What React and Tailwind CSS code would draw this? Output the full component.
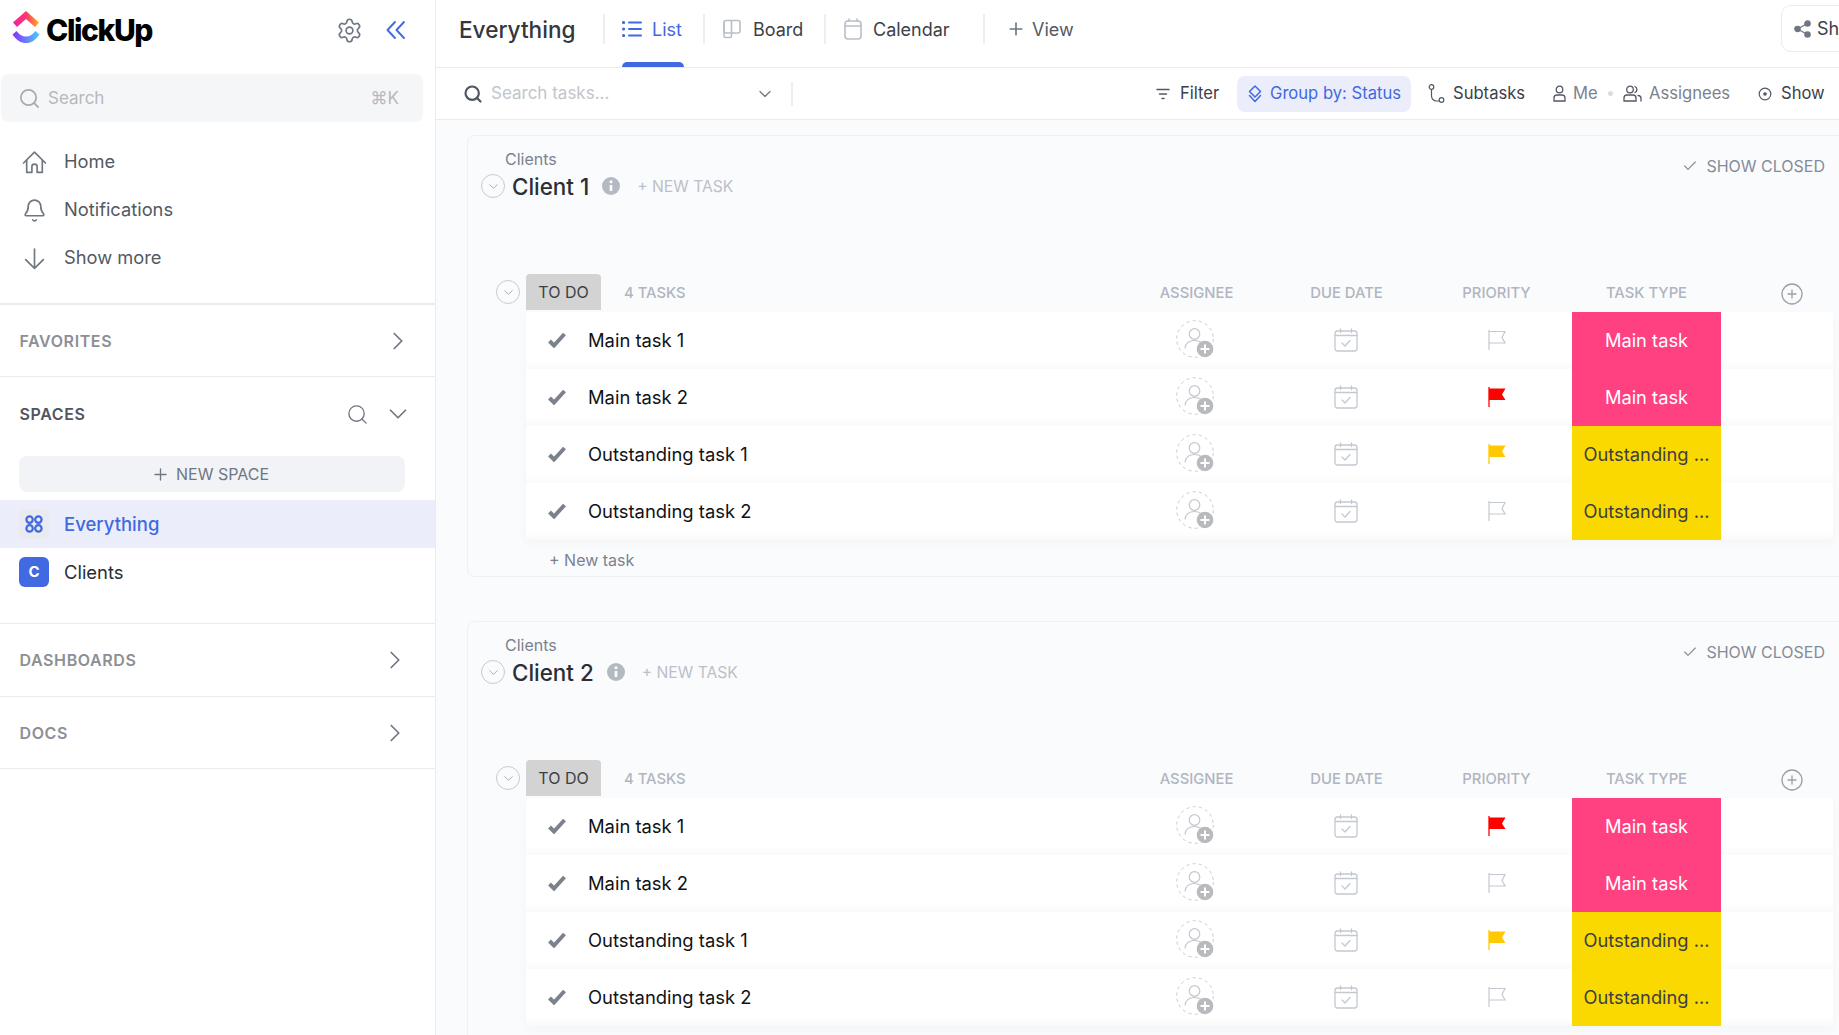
import React from "react";
import { Bell, Settings, Search, ChevronRight, ChevronDown, Plus, Check, CirclePlus } from "lucide-react";

const Logo = () => (
  <svg width="28" height="35" viewBox="0 0 28 35" className="-mt-[6px] shrink-0">
    <defs>
      <linearGradient id="lgTop" x1="0" y1="0" x2="1" y2="0">
        <stop offset="0" stopColor="#f81ba4" />
        <stop offset="0.55" stopColor="#fb3e6a" />
        <stop offset="1" stopColor="#ffb01f" />
      </linearGradient>
      <linearGradient id="lgBot" x1="0" y1="0" x2="1" y2="0">
        <stop offset="0" stopColor="#8930fd" />
        <stop offset="1" stopColor="#49ccf9" />
      </linearGradient>
    </defs>
    <path d="M1 12.5 L14 1 L27 12.5 L23 17 L14 9 L5 17 Z" fill="url(#lgTop)" />
    <path d="M0.5 24.5 L4.5 21 C7.5 25 10.5 26.5 14 26.5 C17.5 26.5 20.5 25 23.5 21 L27.5 24.5 C23.5 30.5 19 33 14 33 C9 33 4.5 30.5 0.5 24.5 Z" fill="url(#lgBot)" />
  </svg>
);

const HomeIcon = () => (
  <svg width="25" height="25" viewBox="0 0 24 24" fill="none" stroke="#6f7782" strokeWidth="1.6" strokeLinecap="round" strokeLinejoin="round">
    <path d="M1.5 12.5L12 2L22.5 12.5" />
    <path d="M4.5 10V21.5H9.5V16a2.5 2.5 0 0 1 5 0V21.5H19.5V10" />
  </svg>
);
const BellIcon = () => <Bell size={25} strokeWidth={1.6} className="text-[#6f7782]" />;
const ArrowIcon = () => (
  <svg width="25" height="25" viewBox="0 0 24 24" fill="none" stroke="#6f7782" strokeWidth="1.6" strokeLinecap="round" strokeLinejoin="round">
    <path d="M12 3V21.5M3.5 13L12 21.5L20.5 13" />
  </svg>
);

const SideRow = ({ icon: I, label }) => (
  <div className="flex h-12 items-center pl-[22px] text-[18.3px] text-[#535963]">
    <div className="w-[25px]"><I /></div>
    <span className="ml-[17px]">{label}</span>
  </div>
);

const SideSection = ({ label, height, pad }) => (
  <div className={"flex items-center justify-between border-b border-[#e9ebf0] pl-[19.5px] " + height + " " + pad}>
    <span className="text-[16px] font-semibold tracking-[0.6px] text-[#8c8f94]">{label}</span>
    <ChevronRight size={30} strokeWidth={1.4} className="text-[#6f7782]" />
  </div>
);

const Sidebar = () => (
  <div className="flex h-full w-[436px] shrink-0 flex-col border-r border-[#e9ebf0] bg-white">
    <div className="mb-[14px] flex h-[60px] items-center pl-[12px]">
      <Logo />
      <span className="ml-[6px] text-[30px] font-extrabold leading-none tracking-[-1.4px] text-black">ClickUp</span>
      <Settings size={27} strokeWidth={1.5} className="ml-auto text-[#6f7782]" />
      <svg width="20" height="20" viewBox="0 0 20 20" fill="none" stroke="#4169e1" strokeWidth="1.9" strokeLinecap="round" strokeLinejoin="round" className="ml-[23px] mr-[29px]">
        <path d="M9 2L1.5 10L9 18M18 2L10.5 10L18 18" />
      </svg>
    </div>
    <div className="ml-px flex h-12 w-[422px] items-center rounded-lg bg-[#f5f6f8] pl-[17px] pr-[24px] text-[17px] text-[#b5b9c0]">
      <Search size={23} strokeWidth={1.8} className="text-[#a6aab1]" />
      <span className="ml-[7px] pt-px">Search</span>
      <span className="ml-auto pt-px text-[17px]">⌘K</span>
    </div>
    <div className="mt-[16px] mb-[21px]">
      <SideRow icon={HomeIcon} label="Home" />
      <SideRow icon={BellIcon} label="Notifications" />
      <SideRow icon={ArrowIcon} label="Show more" />
    </div>
    <div className="border-t-2 border-[#e9ebf0]">
      <SideSection label="FAVORITES" height="h-[72px]" pad="pr-[22px]" />
    </div>
    <div className="border-b border-[#e9ebf0] pb-[27px]">
      <div className="flex h-[74px] items-center pl-[19.5px] pr-[22px]">
        <span className="text-[16px] font-semibold tracking-[0.6px] text-[#50565f]">SPACES</span>
        <Search size={23} strokeWidth={1.4} className="ml-auto text-[#6f7782]" />
        <ChevronDown size={30} strokeWidth={1.4} className="ml-[14px] text-[#6f7782]" />
      </div>
      <div className="mx-[19px] mt-[5px] flex h-[36px] w-[386px] items-center justify-center rounded-lg bg-[#f2f3f7] pr-[4px] text-[16px] text-[#6f7782]">
        <Plus size={19} strokeWidth={1.7} className="mr-[6px]" />
        NEW SPACE
      </div>
      <div className="mt-[8px] flex h-12 items-center bg-[#ebeefa] pl-[19px]">
        <div className="flex h-[30px] w-[30px] items-center justify-center rounded-md bg-[#e9ebf0]">
          <svg width="18" height="18" viewBox="0 0 18 18" fill="none" stroke="#4169e1" strokeWidth="2.2">
            <circle cx="4.6" cy="4.6" r="3.2" />
            <circle cx="13.4" cy="4.6" r="3.2" />
            <circle cx="4.6" cy="13.4" r="3.2" />
            <circle cx="13.4" cy="13.4" r="3.2" />
          </svg>
        </div>
        <span className="ml-[15px] pt-px text-[18.5px] font-medium text-[#4169e1]">Everything</span>
      </div>
      <div className="flex h-12 items-center pl-[19px]">
        <div className="flex h-[30px] w-[30px] items-center justify-center rounded-md bg-[#4169e1] text-[15px] font-bold text-white">C</div>
        <span className="ml-[15px] pt-px text-[18.4px] text-[#292d34]">Clients</span>
      </div>
    </div>
    <SideSection label="DASHBOARDS" height="h-[73px]" pad="pr-[25px]" />
    <SideSection label="DOCS" height="h-[72px]" pad="pr-[25px]" />
  </div>
);

const ListIcon = () => (
  <svg width="20" height="18" viewBox="0 0 20 18" stroke="#4169e1" strokeWidth="2" fill="none" strokeLinecap="round">
    <path d="M7 2.5H19M7 9H19M7 15.5H19" />
    <circle cx="1.6" cy="2.5" r="1" fill="#4169e1" strokeWidth="1.2" />
    <circle cx="1.6" cy="9" r="1" fill="#4169e1" strokeWidth="1.2" />
    <circle cx="1.6" cy="15.5" r="1" fill="#4169e1" strokeWidth="1.2" />
  </svg>
);
const BoardIcon = () => (
  <svg width="18" height="20" viewBox="0 0 18 20" fill="none" stroke="#b9bec7" strokeWidth="1.6" strokeLinejoin="round">
    <rect x="1" y="1.5" width="16" height="12.5" rx="2" />
    <path d="M8.5 1.5V17a1.5 1.5 0 0 1-1.5 1.5H2.5A1.5 1.5 0 0 1 1 17V3" />
  </svg>
);
const CalIcon = () => (
  <svg width="18" height="22" viewBox="0 0 18 22" fill="none" stroke="#b9bec7" strokeWidth="1.6" strokeLinecap="round">
    <rect x="1" y="3" width="16" height="18" rx="3" />
    <path d="M1 8H17M5 1V3M13 1V3" />
  </svg>
);

const Divider = ({ cls }) => <div className={"h-[30px] w-[2px] bg-[#eceef2] " + cls} />;

const TopBar = () => (
  <div className="flex h-[68px] shrink-0 items-start border-b border-[#e9ebf0] pl-[23px] pt-[14px] text-[18px] leading-[30px] text-[#3c4149]">
    <span className="w-[144px] pt-px text-[22.6px] font-medium leading-[30px] text-[#33373e]">Everything</span>
    <Divider cls="" />
    <div className="relative ml-[17px] flex h-[30px] w-[62px] items-center text-[#4169e1]">
      <ListIcon />
      <span className="ml-[10px] pt-px">List</span>
      <div className="absolute top-[48px] left-0 right-0 h-[5px] rounded-t-md bg-[#4169e1]" />
    </div>
    <Divider cls="ml-[19px]" />
    <div className="ml-[18px] flex h-[30px] w-[101px] items-center">
      <BoardIcon />
      <span className="ml-[12px] pt-px">Board</span>
    </div>
    <Divider cls="" />
    <div className="ml-[18px] flex h-[30px] w-[139px] items-center">
      <CalIcon />
      <span className="ml-[11px] pt-px">Calendar</span>
    </div>
    <Divider cls="" />
    <div className="ml-[21px] flex h-[30px] items-center text-[#535963]">
      <Plus size={20} strokeWidth={2} className="text-[#6f7782]" />
      <span className="ml-[6px] pt-px">View</span>
    </div>
    <div className="ml-auto mr-[-40px] -mt-[9px] flex h-[47px] w-[98px] items-center rounded-[10px] border border-[#e9ebf0] pl-[12px]">
      <svg width="17" height="18" viewBox="0 0 17 18" fill="#6f7782" stroke="#6f7782" strokeWidth="1.4">
        <circle cx="13.5" cy="3.5" r="2.6" />
        <circle cx="3.5" cy="9" r="2.6" />
        <circle cx="13.5" cy="14.5" r="2.6" />
        <path d="M3.5 9L13.5 3.5M3.5 9L13.5 14.5" />
      </svg>
      <span className="ml-[6px]">Share</span>
    </div>
  </div>
);

const FilterIcon = () => (
  <svg width="14" height="12" viewBox="0 0 14 12" stroke="#535963" strokeWidth="1.5" strokeLinecap="round">
    <path d="M1 1.5H13M3.5 6H10.5M6 10.5H8" />
  </svg>
);
const GroupIcon = () => (
  <svg width="14" height="18" viewBox="0 0 14 18" fill="none" stroke="#4169e1" strokeWidth="1.5" strokeLinejoin="round" strokeLinecap="round">
    <path d="M7 1L12.5 6.5L7 12L1.5 6.5Z" />
    <path d="M1.5 10.5L7 16.5L12.5 10.5" />
  </svg>
);
const SubIcon = () => (
  <svg width="17" height="20" viewBox="0 0 17 20" fill="none" stroke="#535963" strokeWidth="1.2">
    <circle cx="3.5" cy="3" r="2.3" />
    <circle cx="13.5" cy="16" r="2.3" />
    <path d="M3.5 5.3V12a5 5 0 0 0 5 5H11.2" />
  </svg>
);
const MeIcon = () => (
  <svg width="13" height="17" viewBox="0 0 13 17" fill="none" stroke="#535963" strokeWidth="1.3">
    <circle cx="6.5" cy="4.5" r="3.3" />
    <path d="M1 16V13a3 3 0 0 1 3-3H9a3 3 0 0 1 3 3V16Z" />
  </svg>
);
const PeopleIcon = () => (
  <svg width="19" height="17" viewBox="0 0 19 17" fill="none" stroke="#535963" strokeWidth="1.3" strokeLinecap="round">
    <circle cx="7" cy="4.5" r="3.3" />
    <path d="M1 16V13a3 3 0 0 1 3-3H10a3 3 0 0 1 3 3V16Z" />
    <path d="M12 1.5a3.3 3.3 0 0 1 0 6M15 10.5a3 3 0 0 1 3 3V16" />
  </svg>
);
const ShowIcon = () => (
  <svg width="14" height="14" viewBox="0 0 14 14" fill="none" stroke="#535963" strokeWidth="1.2">
    <circle cx="7" cy="7" r="5.8" />
    <circle cx="7" cy="7" r="1.2" fill="#535963" />
  </svg>
);

const Toolbar = () => (
  <div className="flex h-[52px] shrink-0 items-center border-b border-[#e9ebf0] pl-[27px] text-[16.6px] text-[#3c4149]">
    <Search size={20} strokeWidth={2.6} className="text-[#505661]" />
    <span className="ml-[8px] w-[264px] text-[17px] text-[#c2c5cb]">Search tasks...</span>
    <ChevronDown size={20} strokeWidth={1.5} className="text-[#6f7782]" />
    <div className="ml-[16px] h-[24px] w-[2px] bg-[#eceef2]" />
    <div className="ml-auto flex items-center pr-[14px]">
      <FilterIcon />
      <span className="ml-[10px] w-[38px]">Filter</span>
      <div className="ml-[19px] flex h-[36px] w-[174px] items-center rounded-lg bg-[#ebeefa] pl-[11px] text-[#4169e1]">
        <GroupIcon />
        <span className="ml-[8px]">Group by: Status</span>
      </div>
      <div className="ml-[17px]"><SubIcon /></div>
      <span className="ml-[8px] w-[72px]">Subtasks</span>
      <div className="ml-[28px]"><MeIcon /></div>
      <span className="ml-[7px] w-[25px] text-[#7c828d]">Me</span>
      <div className="ml-[10px] h-[5px] w-[5px] rounded-full bg-[#d9dce1]" />
      <div className="ml-[10px]"><PeopleIcon /></div>
      <span className="ml-[7px] w-[80px] text-[#7c828d]">Assignees</span>
      <div className="ml-[29px]"><ShowIcon /></div>
      <span className="ml-[9px] w-[44px]">Show</span>
    </div>
  </div>
);

const CircleChevron = () => (
  <div className="flex h-[24px] w-[24px] shrink-0 items-center justify-center rounded-full border border-[#c6cad1]">
    <ChevronDown size={15} strokeWidth={1.5} className="text-[#a6aab1]" />
  </div>
);

const Assignee = () => (
  <svg width="40" height="40" viewBox="0 0 40 40" fill="none">
    <circle cx="19" cy="19" r="18.3" stroke="#c9ccd1" strokeWidth="1" strokeDasharray="3.2 3.2" />
    <circle cx="18.5" cy="14" r="5.3" stroke="#c4c7cd" strokeWidth="1.2" />
    <path d="M9 28.5C9 23.5 13 20.5 18.5 20.5C21 20.5 23 21 25 22.5" stroke="#c4c7cd" strokeWidth="1.2" />
    <circle cx="29" cy="29" r="8.3" fill="#b8babd" />
    <path d="M29 24.5V33.5M24.5 29H33.5" stroke="#fff" strokeWidth="2" />
  </svg>
);

const DueIcon = () => (
  <svg width="24" height="24" viewBox="0 0 24 24" fill="none" stroke="#c4c8cf" strokeWidth="1.3" strokeLinecap="round" strokeLinejoin="round">
    <rect x="1" y="3" width="22" height="20" rx="2.5" />
    <path d="M1 7.5H23M6.5 1V4.5M17.5 1V4.5" />
    <path d="M8 15L11 18L16 12.5" />
  </svg>
);

const Flag = ({ color }) =>
  color ? (
    <svg width="18" height="22" viewBox="0 0 18 22">
      <path d="M1 1V21" stroke={color} strokeWidth="1.3" />
      <path d="M1 2.5H17.5L14 8.5L17.5 14H1Z" fill={color} />
    </svg>
  ) : (
    <svg width="18" height="22" viewBox="0 0 18 22" fill="none" stroke="#c4c8cf" strokeWidth="1.2">
      <path d="M1 1V21" />
      <path d="M1 2.5H17L14 8.5L17 14H1" />
    </svg>
  );

const TaskCheck = () => (
  <svg width="18" height="16" viewBox="0 0 18 16" fill="none" stroke="#7c828d" strokeWidth="4">
    <path d="M1.5 9L6 13.5L16.5 2" />
  </svg>
);

const Row = ({ name, flag, pink }) => (
  <div className="flex h-[57px] items-center bg-[linear-gradient(to_bottom,#ffffff_84%,#fafafb_100%)]">
    <div className="flex min-w-0 flex-1 items-center pl-[22px]">
      <TaskCheck />
      <span className="ml-[22px] text-[18.4px] text-[#101216]">{name}</span>
    </div>
    <div className="flex w-[151px] justify-center pb-px pl-[3px]"><Assignee /></div>
    <div className="flex w-[151px] justify-center pb-[2px]"><DueIcon /></div>
    <div className="flex w-[151px] justify-center pb-px pl-px"><Flag color={flag} /></div>
    <div className={"flex h-[57px] w-[149px] items-center justify-center text-[18.3px] " + (pink ? "bg-[#ff4081] text-white" : "bg-[#fad900] text-[#3c3f45]")}>
      {pink ? "Main task" : "Outstanding ..."}
    </div>
    <div className="w-[112px]" />
  </div>
);

const Head = ({ children, cls }) => (
  <div className={"w-[151px] pt-[2px] text-center text-[14.8px] font-medium text-[#b0b5bf] " + cls}>{children}</div>
);

const InfoIcon = () => (
  <svg width="18" height="18" viewBox="0 0 18 18" className="ml-[13px] shrink-0">
    <circle cx="9" cy="9" r="9" fill="#b5bac2" />
    <circle cx="9" cy="4.8" r="1.5" fill="#fff" />
    <path d="M9 8V14" stroke="#fff" strokeWidth="2.6" />
  </svg>
);

const Card = ({ title, tasks, last }) => (
  <div className={"w-[1400px] rounded-l-lg border border-[#eff0f3] bg-[#fafbfd] " + (last ? "mt-[44px]" : "")}>
    <div className="flex items-start justify-between">
      <div className="pl-[13px] pt-[11px]">
        <div className="h-[24px] pl-[24px] text-[16px] leading-[24px] text-[#7c828d]">Clients</div>
        <div className="flex h-[30px] items-center">
          <CircleChevron />
          <span className="ml-[7px] pt-px text-[22.4px] font-medium text-[#2b2e34]">{title}</span>
          <InfoIcon />
          <span className="ml-[17px] pt-px text-[15.7px] text-[#bcc0c8]">+ NEW TASK</span>
        </div>
      </div>
      <div className="flex items-center pt-[18px] pr-[41px] text-[16px] text-[#858c98]">
        <Check size={16} strokeWidth={1.7} />
        <span className="ml-[8px]">SHOW CLOSED</span>
      </div>
    </div>
    <div className="mt-[73px] ml-[28px] flex h-[36px] items-center">
      <CircleChevron />
      <div className="ml-[6px] flex h-[36px] w-[75px] items-center justify-center rounded-t bg-[#d3d3d3] text-[16px] text-[#3c3f45]">TO DO</div>
      <div className="ml-[23px] flex-1 pt-[2px] text-[14.8px] font-medium text-[#b0b5bf]">4 TASKS</div>
      <Head cls="pl-[8px]">ASSIGNEE</Head>
      <Head cls="pl-[6px]">DUE DATE</Head>
      <Head cls="pl-[4px]">PRIORITY</Head>
      <Head cls="pl-[2px]">TASK TYPE</Head>
      <div className="flex w-[112px] justify-center pl-[30px] pt-[4px]">
        <CirclePlus size={24} strokeWidth={1.3} className="text-[#9ba0a8]" />
      </div>
      <div className="w-[33px]" />
    </div>
    <div className="mt-[2px] ml-[58px] w-[1307px] shadow-[0_4px_10px_rgba(40,50,70,0.03)]">
      {tasks.map((t) => (
        <Row key={t.name} {...t} />
      ))}
    </div>
    <div className="flex h-[36px] items-center pl-[81px] pt-[4px] text-[16px] text-[#7c828d]">+ New task</div>
  </div>
);

const tasks1 = [
  { name: "Main task 1", pink: true },
  { name: "Main task 2", pink: true, flag: "#ff0000" },
  { name: "Outstanding task 1", flag: "#ffc800" },
  { name: "Outstanding task 2" },
];
const tasks2 = [
  { name: "Main task 1", pink: true, flag: "#ff0000" },
  { name: "Main task 2", pink: true },
  { name: "Outstanding task 1", flag: "#ffc800" },
  { name: "Outstanding task 2" },
];

export default function App() {
  return (
    <div className="flex h-[1035px] w-[1839px] overflow-hidden bg-white font-['Inter',sans-serif] antialiased">
      <Sidebar />
      <div className="flex min-w-0 flex-1 flex-col overflow-hidden">
        <TopBar />
        <Toolbar />
        <div className="flex-1 overflow-hidden bg-[#fafbfd] pl-[31px] pt-[15px]">
          <Card title="Client 1" tasks={tasks1} />
          <Card title="Client 2" tasks={tasks2} last />
        </div>
      </div>
    </div>
  );
}
